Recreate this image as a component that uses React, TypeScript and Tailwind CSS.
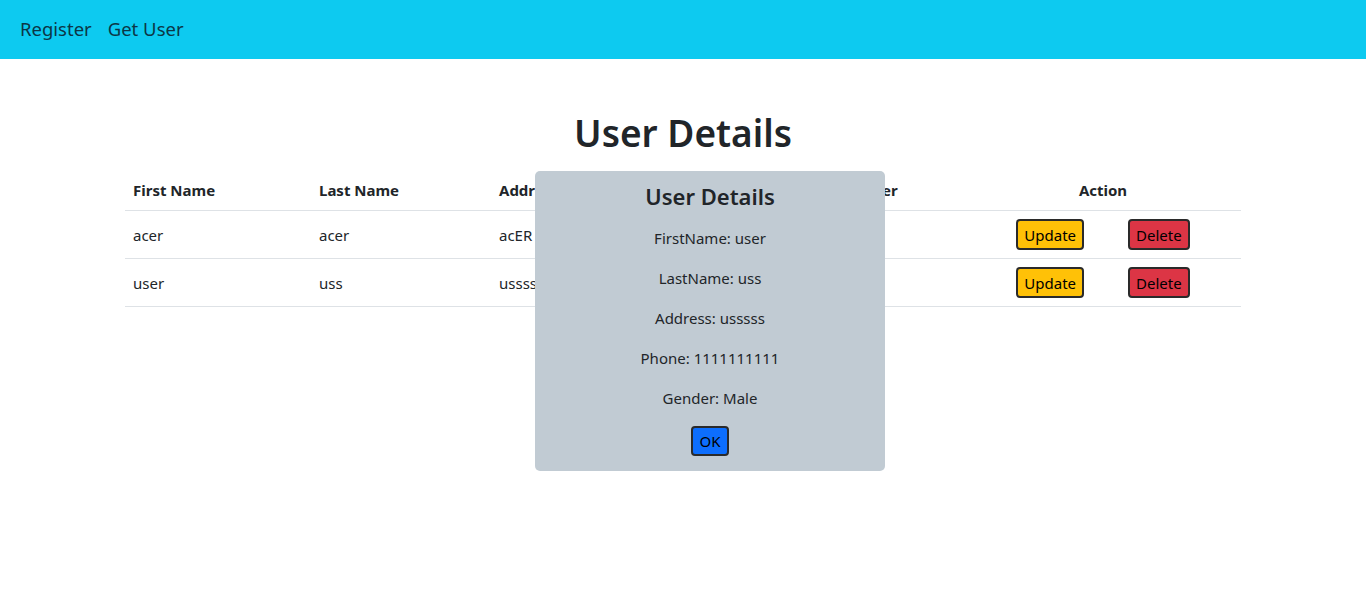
import React from 'react';

type User = {
  firstName: string;
  lastName: string;
  address: string;
  phone: string;
  gender: string;
};

const users: User[] = [
  { firstName: 'acer', lastName: 'acer', address: 'acER', phone: '9999999999', gender: 'Male' },
  { firstName: 'user', lastName: 'uss', address: 'usssss', phone: '1111111111', gender: 'Male' },
];

const selected = users[1];

function Navbar() {
  return (
    <nav className="h-[59px] bg-[#0dcaf0] px-5 pb-px flex items-center gap-4 text-[18.5px] text-[#0c3646]">
      <a href="#">Register</a>
      <a href="#">Get User</a>
    </nav>
  );
}

function UserTable() {
  return (
    <table className="w-[1116px] mx-auto border-collapse text-left table-fixed">
      <colgroup>
        <col className="w-[186px]" />
        <col className="w-[180px]" />
        <col className="w-[164px]" />
        <col className="w-[180px]" />
        <col className="w-[130px]" />
        <col className="w-[276px]" />
      </colgroup>
      <thead>
        <tr className="border-b border-[#dee2e6]">
          <th className="px-2 py-2 font-bold">First Name</th>
          <th className="px-2 py-2 font-bold">Last Name</th>
          <th className="px-2 py-2 font-bold">Address</th>
          <th className="px-2 py-2 font-bold">Phone</th>
          <th className="px-2 py-2 font-bold">Gender</th>
          <th className="px-2 py-2 font-bold text-center">Action</th>
        </tr>
      </thead>
      <tbody>
        {users.map((u) => (
          <tr key={u.firstName} className="border-b border-[#dee2e6]">
            <td className="px-2 py-2">{u.firstName}</td>
            <td className="px-2 py-2">{u.lastName}</td>
            <td className="px-2 py-2">{u.address}</td>
            <td className="px-2 py-2">{u.phone}</td>
            <td className="px-2 py-2">{u.gender}</td>
            <td className="px-2 py-2">
              <div className="flex justify-center gap-[44px]">
                <button className="h-[31px] px-[6px] bg-[#ffc107] border-2 border-[#2a2a2a] rounded-[4px] text-black">
                  Update
                </button>
                <button className="h-[31px] px-[6px] bg-[#dc3545] border-2 border-[#2a2a2a] rounded-[4px] text-black">
                  Delete
                </button>
              </div>
            </td>
          </tr>
        ))}
      </tbody>
    </table>
  );
}

function DetailsModal({ user }: { user: User }) {
  return (
    <div className="absolute left-[535px] top-[171px] w-[350px] h-[300px] bg-[#c1cbd3] rounded-[5px] flex flex-col items-center pt-[11px]">
      <h2 className="text-[22px] leading-[29px] font-semibold mb-[15px]">User Details</h2>
      <p className="mb-4">FirstName: {user.firstName}</p>
      <p className="mb-4">LastName: {user.lastName}</p>
      <p className="mb-4">Address: {user.address}</p>
      <p className="mb-4">Phone: {user.phone}</p>
      <p className="mb-4">Gender: {user.gender}</p>
      <button className="h-[30px] px-[6px] bg-[#0d6efd] border-2 border-[#2a2a2a] rounded-[4px] text-black">
        OK
      </button>
    </div>
  );
}

export default function App() {
  return (
    <div className="relative min-h-[590px] bg-white text-[#212529] text-[15px] leading-6 font-['Noto_Sans',sans-serif]">
      <Navbar />
      <main>
        <h1 className="mt-[50px] mb-[13px] text-center text-[37px] leading-[48px] font-semibold">User Details</h1>
        <UserTable />
      </main>
      <DetailsModal user={selected} />
    </div>
  );
}
